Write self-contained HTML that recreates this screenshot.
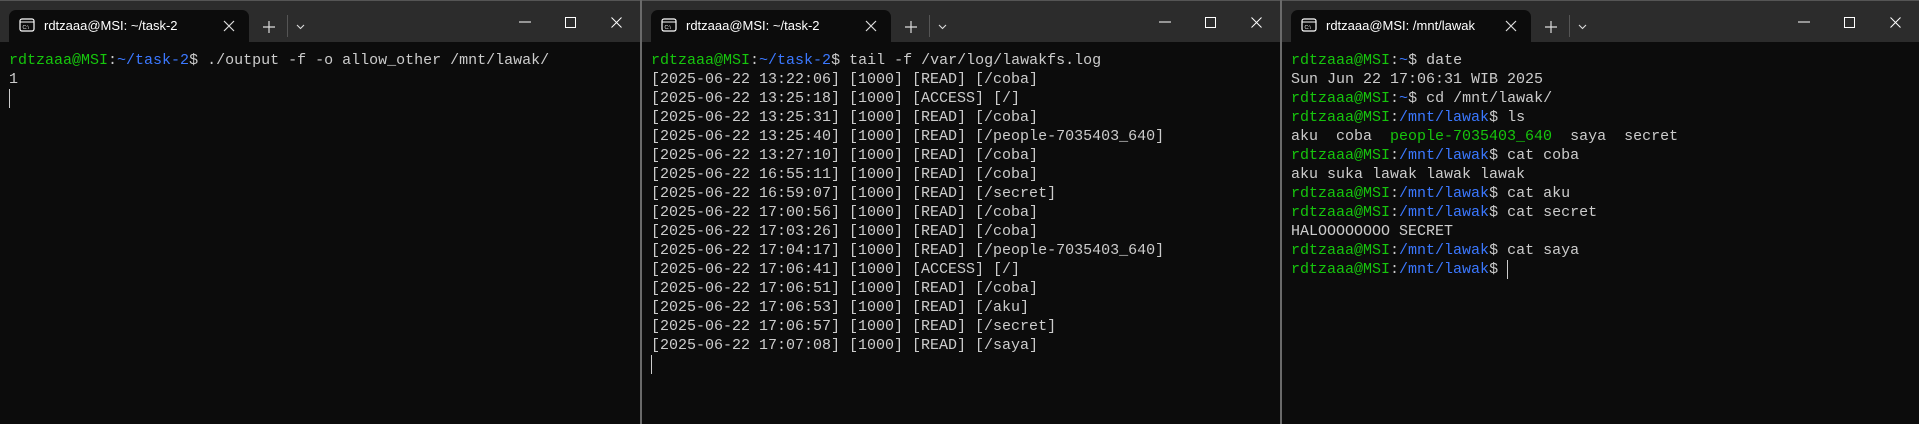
<!DOCTYPE html>
<html><head><meta charset="utf-8"><style>
*{margin:0;padding:0;box-sizing:border-box}
body{width:1919px;height:424px;background:#0c0c0c;position:relative;overflow:hidden;font-family:"Liberation Mono",monospace}
.win{position:absolute;top:0;height:424px;background:#0c0c0c;border-top:1px solid #555}
.bar{position:absolute;left:0;right:0;top:0;height:41px;background:#2c2c2c}
.tab{position:absolute;left:9px;top:9px;width:240px;height:32px;background:#0c0c0c;border-radius:7px 7px 0 0}
.tab .t{position:absolute;left:35px;top:8px;font:13px "Liberation Sans",sans-serif;color:#fff}
.tab svg{position:absolute}
.ctl{position:absolute;top:0}
.term{position:absolute;left:9px;top:50px;font-size:15px;line-height:19px;color:#cccccc;white-space:pre}
.g{color:#16c60c}.b{color:#3b78ff}
.cur{display:inline-block;width:1px;height:19px;background:#ccc;vertical-align:top}
.div{position:absolute;top:0;width:2px;height:424px;background:#6a6a6a}
</style></head><body>

<div class="win" style="left:0;width:640px">
 <div class="bar"></div>
 <div class="tab">
  <svg style="left:10px;top:8px" width="16" height="14" viewBox="0 0 16 14"><rect x="1" y="1" width="14" height="12" rx="2" fill="none" stroke="#fff" stroke-width="1.2"/><line x1="1" y1="4" x2="15" y2="4" stroke="#fff" stroke-width="1"/><text x="3.5" y="11" font-size="5" fill="#fff" font-family="Liberation Sans">C:\</text></svg>
  <span class="t">rdtzaaa@MSI: ~/task-2</span>
  <svg style="left:214px;top:10px" width="12" height="12"><path d="M1 1L11 11M11 1L1 11" stroke="#ddd" stroke-width="1.2"/></svg>
 </div>
 <svg class="ctl" style="left:262px;top:19px" width="14" height="14"><path d="M7 1V13M1 7H13" stroke="#ddd" stroke-width="1.2"/></svg>
 <div style="position:absolute;left:287px;top:14px;width:1px;height:22px;background:#555"></div>
 <svg class="ctl" style="left:296px;top:23px" width="9" height="6"><path d="M1 1L4.5 4.5L8 1" stroke="#ddd" stroke-width="1.1" fill="none"/></svg>
 <svg class="ctl" style="left:519px;top:20px" width="12" height="2"><path d="M0 1H12" stroke="#fff" stroke-width="1"/></svg>
 <svg class="ctl" style="left:565px;top:16px" width="11" height="11"><rect x="0.5" y="0.5" width="10" height="10" fill="none" stroke="#fff" stroke-width="1"/></svg>
 <svg class="ctl" style="left:611px;top:16px" width="11" height="11"><path d="M0.5 0.5L10.5 10.5M10.5 0.5L0.5 10.5" stroke="#fff" stroke-width="1"/></svg>
 <div class="term"><span class="g">rdtzaaa@MSI</span>:<span class="b">~/task-2</span>$ ./output -f -o allow_other /mnt/lawak/
1
<span class="cur"></span></div>
</div>
<div class="div" style="left:640px"></div>

<div class="win" style="left:642px;width:638px">
 <div class="bar"></div>
 <div class="tab">
  <svg style="left:10px;top:8px" width="16" height="14" viewBox="0 0 16 14"><rect x="1" y="1" width="14" height="12" rx="2" fill="none" stroke="#fff" stroke-width="1.2"/><line x1="1" y1="4" x2="15" y2="4" stroke="#fff" stroke-width="1"/><text x="3.5" y="11" font-size="5" fill="#fff" font-family="Liberation Sans">C:\</text></svg>
  <span class="t">rdtzaaa@MSI: ~/task-2</span>
  <svg style="left:214px;top:10px" width="12" height="12"><path d="M1 1L11 11M11 1L1 11" stroke="#ddd" stroke-width="1.2"/></svg>
 </div>
 <svg class="ctl" style="left:262px;top:19px" width="14" height="14"><path d="M7 1V13M1 7H13" stroke="#ddd" stroke-width="1.2"/></svg>
 <div style="position:absolute;left:287px;top:14px;width:1px;height:22px;background:#555"></div>
 <svg class="ctl" style="left:296px;top:23px" width="9" height="6"><path d="M1 1L4.5 4.5L8 1" stroke="#ddd" stroke-width="1.1" fill="none"/></svg>
 <svg class="ctl" style="left:517px;top:20px" width="12" height="2"><path d="M0 1H12" stroke="#fff" stroke-width="1"/></svg>
 <svg class="ctl" style="left:563px;top:16px" width="11" height="11"><rect x="0.5" y="0.5" width="10" height="10" fill="none" stroke="#fff" stroke-width="1"/></svg>
 <svg class="ctl" style="left:609px;top:16px" width="11" height="11"><path d="M0.5 0.5L10.5 10.5M10.5 0.5L0.5 10.5" stroke="#fff" stroke-width="1"/></svg>
 <div class="term"><span class="g">rdtzaaa@MSI</span>:<span class="b">~/task-2</span>$ tail -f /var/log/lawakfs.log
[2025-06-22 13:22:06] [1000] [READ] [/coba]
[2025-06-22 13:25:18] [1000] [ACCESS] [/]
[2025-06-22 13:25:31] [1000] [READ] [/coba]
[2025-06-22 13:25:40] [1000] [READ] [/people-7035403_640]
[2025-06-22 13:27:10] [1000] [READ] [/coba]
[2025-06-22 16:55:11] [1000] [READ] [/coba]
[2025-06-22 16:59:07] [1000] [READ] [/secret]
[2025-06-22 17:00:56] [1000] [READ] [/coba]
[2025-06-22 17:03:26] [1000] [READ] [/coba]
[2025-06-22 17:04:17] [1000] [READ] [/people-7035403_640]
[2025-06-22 17:06:41] [1000] [ACCESS] [/]
[2025-06-22 17:06:51] [1000] [READ] [/coba]
[2025-06-22 17:06:53] [1000] [READ] [/aku]
[2025-06-22 17:06:57] [1000] [READ] [/secret]
[2025-06-22 17:07:08] [1000] [READ] [/saya]
<span class="cur"></span></div>
</div>
<div class="div" style="left:1280px"></div>

<div class="win" style="left:1282px;width:637px">
 <div class="bar"></div>
 <div class="tab">
  <svg style="left:10px;top:8px" width="16" height="14" viewBox="0 0 16 14"><rect x="1" y="1" width="14" height="12" rx="2" fill="none" stroke="#fff" stroke-width="1.2"/><line x1="1" y1="4" x2="15" y2="4" stroke="#fff" stroke-width="1"/><text x="3.5" y="11" font-size="5" fill="#fff" font-family="Liberation Sans">C:\</text></svg>
  <span class="t">rdtzaaa@MSI: /mnt/lawak</span>
  <svg style="left:214px;top:10px" width="12" height="12"><path d="M1 1L11 11M11 1L1 11" stroke="#ddd" stroke-width="1.2"/></svg>
 </div>
 <svg class="ctl" style="left:262px;top:19px" width="14" height="14"><path d="M7 1V13M1 7H13" stroke="#ddd" stroke-width="1.2"/></svg>
 <div style="position:absolute;left:287px;top:14px;width:1px;height:22px;background:#555"></div>
 <svg class="ctl" style="left:296px;top:23px" width="9" height="6"><path d="M1 1L4.5 4.5L8 1" stroke="#ddd" stroke-width="1.1" fill="none"/></svg>
 <svg class="ctl" style="left:516px;top:20px" width="12" height="2"><path d="M0 1H12" stroke="#fff" stroke-width="1"/></svg>
 <svg class="ctl" style="left:562px;top:16px" width="11" height="11"><rect x="0.5" y="0.5" width="10" height="10" fill="none" stroke="#fff" stroke-width="1"/></svg>
 <svg class="ctl" style="left:608px;top:16px" width="11" height="11"><path d="M0.5 0.5L10.5 10.5M10.5 0.5L0.5 10.5" stroke="#fff" stroke-width="1"/></svg>
 <div class="term"><span class="g">rdtzaaa@MSI</span>:<span class="b">~</span>$ date
Sun Jun 22 17:06:31 WIB 2025
<span class="g">rdtzaaa@MSI</span>:<span class="b">~</span>$ cd /mnt/lawak/
<span class="g">rdtzaaa@MSI</span>:<span class="b">/mnt/lawak</span>$ ls
aku  coba  <span class="g">people-7035403_640</span>  saya  secret
<span class="g">rdtzaaa@MSI</span>:<span class="b">/mnt/lawak</span>$ cat coba
aku suka lawak lawak lawak
<span class="g">rdtzaaa@MSI</span>:<span class="b">/mnt/lawak</span>$ cat aku
<span class="g">rdtzaaa@MSI</span>:<span class="b">/mnt/lawak</span>$ cat secret
HALOOOOOOOO SECRET
<span class="g">rdtzaaa@MSI</span>:<span class="b">/mnt/lawak</span>$ cat saya
<span class="g">rdtzaaa@MSI</span>:<span class="b">/mnt/lawak</span>$ <span class="cur"></span></div>
</div>
</body></html>
